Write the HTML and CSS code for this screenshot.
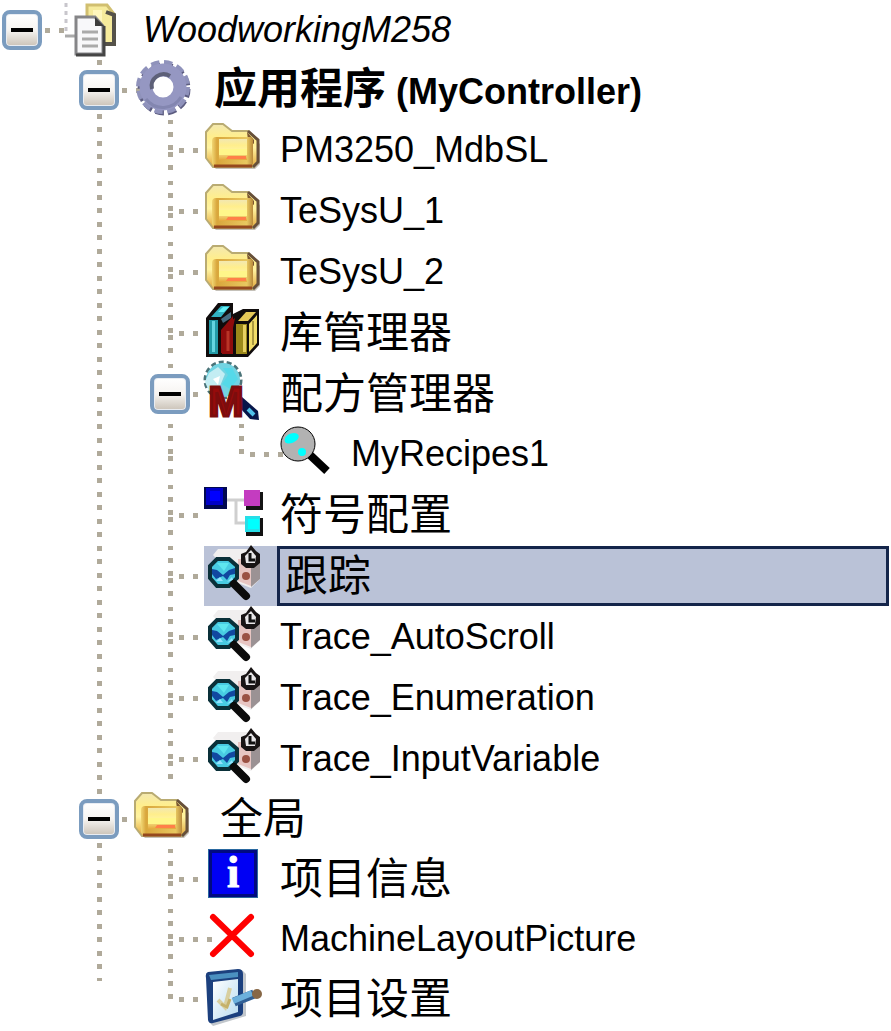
FILE: index.html
```html
<!DOCTYPE html>
<html lang="zh-CN">
<head>
  <meta charset="UTF-8">
  <title>WoodworkingM258</title>
  <meta name="viewport" content="width=device-width, initial-scale=1">
  <link rel="stylesheet" href="styles.css">
</head>
<body>
  <svg class="sprite" aria-hidden="true">
    <defs>
      <linearGradient id="gold" x1="0" y1="0" x2="0" y2="1">
        <stop offset="0" stop-color="#f3e8b0"/>
        <stop offset="0.3" stop-color="#ffee8c"/>
        <stop offset="0.55" stop-color="#fff3a0"/>
        <stop offset="1" stop-color="#e3a83c"/>
      </linearGradient>
      <linearGradient id="goldEdge" x1="0" y1="0" x2="1" y2="0">
        <stop offset="0" stop-color="#f1d774"/>
        <stop offset="0.12" stop-color="#d9a63c"/>
        <stop offset="0.85" stop-color="#e8c860"/>
        <stop offset="1" stop-color="#b98a3c"/>
      </linearGradient>
      <linearGradient id="tablet" x1="0" y1="0" x2="1" y2="1">
        <stop offset="0" stop-color="#ffffff"/>
        <stop offset="1" stop-color="#b9dcf0"/>
      </linearGradient>
    </defs>

    <symbol id="project" viewBox="0 0 60 60">
      <path d="M10 3v30" stroke="#c8c6cc" stroke-width="3" stroke-dasharray="4 4"/>
      <path d="M9 36h10" stroke="#aaa" stroke-width="3"/>
      <path d="M31 5h20l7 9v30H31z" fill="#f6eb9c" stroke="#d1bf70" stroke-width="3"/>
      <path d="M50 12l8 3v29H47" fill="none" stroke="#55524a" stroke-width="4"/>
      <path d="M37 10h9v20h-9z" fill="#fff7bd"/>
      <path d="M20 17h19l8 9v28H20z" fill="#f8f8fa" stroke="#858588" stroke-width="3"/>
      <path d="M20 55h28V26" fill="none" stroke="#454545" stroke-width="3"/>
      <path d="M39 17v9h9z" fill="#3d3d3d"/>
      <path d="M26 32h16M26 39h16M26 46h16" stroke="#aaa" stroke-width="3"/>
    </symbol>

    <symbol id="gear" viewBox="0 0 60 60">
      <circle cx="31" cy="29" r="23" fill="none" stroke="#5c5c80" stroke-width="7" stroke-dasharray="8 4"/>
      <circle cx="30" cy="27" r="24" fill="none" stroke="#8f92bb" stroke-width="6" stroke-dasharray="8 4.6"/>
      <circle cx="30" cy="27" r="17" fill="none" stroke="#9597c2" stroke-width="13"/>
      <path d="M19 29a12 12 0 0 1 18-13" fill="none" stroke="#5d6078" stroke-width="4"/>
      <path d="M13 39a21 21 0 0 0 35-2" fill="none" stroke="#8386b0" stroke-width="3"/>
    </symbol>

    <symbol id="folder" viewBox="0 0 60 60">
      <path d="M5 16l6-8h10l9 7h16l10 9v20l-5 5H12l-7-7z" fill="#8c8373" opacity=".5"/>
      <path d="M2 12l7-8h10l9 7h16l10 9v21l-5 6H9l-7-9z" fill="url(#gold)" stroke="#b9ab72" stroke-width="2"/>
      <path d="M44 11l10 9v22l-5 5" fill="none" stroke="#67503a" stroke-width="3"/>
      <path d="M43 12l7 8v4l-6-4z" fill="#7c5730"/>
      <path d="M12 17h34q3 0 3 3v23q0 3-3 3H12q-4 0-4-4V21q0-4 4-4z" fill="url(#goldEdge)"/>
      <path d="M15 19h28v21H15z" fill="url(#gold)"/>
      <path d="M15 29h28v6H15z" fill="#fff68a"/>
      <path d="M24 36h18v3H22z" fill="#ff8048"/>
      <path d="M10 46h38" stroke="#95491e" stroke-width="3"/>
    </symbol>

    <symbol id="books" viewBox="0 0 60 60">
      <path d="M2 15L14 0h15v11l10-5h16v36L44 54H2z" fill="#100c0c"/>
      <path d="M5 17h9v34H5z" fill="#239aa6"/>
      <path d="M8 18h3v31H8z" fill="#64d4df"/>
      <path d="M7 14L17 3h9l-9 11z" fill="#31b2c2"/>
      <path d="M14 9l5-5h6l-5 5z" fill="#63eff5"/>
      <path d="M17 16l10-7v6l-8 5z" fill="#456b80"/>
      <path d="M17 27l12-14v37H17z" fill="#8f0c0c"/>
      <path d="M19 26l8-8 4-3-2 10v26H18z" fill="#8f0c0c"/>
      <path d="M24 28v20" stroke="#b93427" stroke-width="3"/>
      <path d="M32 21h11v30H32z" fill="#9b881a"/>
      <path d="M39 22h3v27h-3z" fill="#e7cf61"/>
      <path d="M34 18l8-9h10l-8 9z" fill="#e6c958"/>
      <path d="M45 21l8-9v28l-8 9z" fill="#f1dc68"/>
      <path d="M49 18v24" stroke="#67561a" stroke-width="1"/>
    </symbol>

    <symbol id="recipe" viewBox="0 0 60 60">
      <path d="M35 31l17 16" stroke="#000" stroke-width="8"/>
      <circle cx="23" cy="20" r="17" fill="#b2b2b2" stroke="#000" stroke-width="1"/>
      <path d="M10 18c-2-5 4-9 9-9s6 4 3 7-9 5-12 2z" fill="#0ff"/>
      <circle cx="27" cy="28" r="4" fill="#0ff"/>
    </symbol>

    <symbol id="symbols" viewBox="0 0 60 60">
      <path d="M22 15h18M32 15v23h9" fill="none" stroke="#cfcfcf" stroke-width="3"/>
      <path d="M0 2h23v22H0z" fill="#000850"/>
      <path d="M2 3h17v17H2z" fill="#0000c8"/>
      <path d="M6 6h10v10H6z" fill="#00f"/>
      <path d="M42 7h17v18H42z" fill="#141414"/>
      <path d="M40 5h16v16H40z" fill="#c43cc0"/>
      <path d="M42 33h17v18H42z" fill="#111"/>
      <path d="M41 31h15v16H41z" fill="#26dfe8"/>
      <path d="M44 34h11v10H44z" fill="#0ff"/>
    </symbol>

    <symbol id="trace" viewBox="0 0 60 60">
      <path d="M9 9l5-6h30l12 9v21l-9 9-13-5z" fill="#f1efef"/>
      <path d="M34 13h13v27l-13-5z" fill="#e7c5c2"/>
      <path d="M47 16l9-4v21l-9 8z" fill="#9b9294"/>
      <circle cx="42" cy="30" r="4" fill="#9a5143"/>
      <path d="M37 12V8l5-2 5-7 5 6 4 3v9l-6 5h-8l-5-4z" fill="#181414"/>
      <path d="M41 10l6-6 5 6-1 7h-9z" fill="#e9e7e9"/>
      <path d="M46 7v7h5" fill="none" stroke="#111" stroke-width="3"/>
      <path d="M13 13h12l8 7v12l-8 8H13l-7-8V20z" fill="#48cbe2" stroke="#0a3039" stroke-width="4"/>
      <path d="M8 23l5 1 6 5 6-5 6-2v6l-5 1-3 5-4-4-7 3-4-5z" fill="#1148a0"/>
      <path d="M13 17h12l-5 8z" fill="#5ee6ef"/>
      <path d="M12 35h7l-3-4zM23 36l5-5 1 3z" fill="#94e4ff"/>
      <path d="M30 38l12 12" stroke="#0b0b0b" stroke-width="8" stroke-linecap="round"/>
    </symbol>

    <symbol id="picture" viewBox="0 0 60 60">
      <path d="M9 8l38 37M47 8L9 45" stroke="#f00" stroke-width="6" stroke-linecap="round"/>
    </symbol>

    <symbol id="settings" viewBox="0 0 60 60">
      <path d="M6 5l32-4 4 4v42L9 57l-4-4z" fill="#c2c7cc"/>
      <path d="M4 3l30-3q5 0 5 5v38q0 3-3 4L9 54q-4 1-5-3L2 9q-1-5 2-6z" fill="#1c407e"/>
      <path d="M5 6l29-3v5L7 11z" fill="#4b90c0"/>
      <path d="M9 13l25-3v33l-25 8z" fill="url(#tablet)"/>
      <path d="M14 31l7 7 5-19" fill="none" stroke="#d8cfa0" stroke-width="4"/>
      <path d="M17 35l6 3 3-8" fill="none" stroke="#c5b16a" stroke-width="3"/>
      <path d="M30 33l20-8" stroke="#315f94" stroke-width="9"/>
      <path d="M29 32l19-8" stroke="#6cb0dc" stroke-width="6"/>
      <circle cx="53" cy="25" r="5" fill="#876746"/>
    </symbol>
  </svg>

  <ul class="tree">
    <li>
      <div class="row branch long root">
        <button class="toggle" type="button" aria-expanded="true" aria-label="WoodworkingM258"></button>
        <svg class="icon"><use href="#project"/></svg>
        <span class="label latin">WoodworkingM258</span>
      </div>
      <ul class="project">
        <li>
          <div class="row branch long active">
            <button class="toggle" type="button" aria-expanded="true" aria-label="应用程序"></button>
            <svg class="icon"><use href="#gear"/></svg>
            <span class="label">应用程序<span class="latin"> (MyController)</span></span>
          </div>
          <ul class="nodes devices">
            <li><div class="row"><svg class="icon"><use href="#folder"/></svg><span class="label latin">PM3250_MdbSL</span></div></li>
            <li><div class="row"><svg class="icon"><use href="#folder"/></svg><span class="label latin">TeSysU_1</span></div></li>
            <li><div class="row"><svg class="icon"><use href="#folder"/></svg><span class="label latin">TeSysU_2</span></div></li>
            <li><div class="row"><svg class="icon"><use href="#books"/></svg><span class="label">库管理器</span></div></li>
            <li>
              <div class="row branch">
                <button class="toggle" type="button" aria-expanded="true" aria-label="配方管理器"></button>
                <svg class="icon" viewBox="0 0 60 60">
                  <circle cx="19" cy="16" r="18" fill="none" stroke="#4b7378" stroke-width="3" stroke-dasharray="5 3"/>
                  <circle cx="19" cy="16" r="17" fill="#72d4e2"/>
                  <path d="M5 9l9-6 7 7-5 12-11 5-4-9z" fill="#c3edf3"/>
                  <path d="M19 4h9l6 11-8 10-8-5 6-9z" fill="#55d9e9"/>
                  <path d="M9 15l7-3-2 9z" fill="#fff"/>
                  <path d="M38 33l16 14 1 9-9-1-9-10z" fill="#07164a"/>
                  <path d="M44 45l6 6" stroke="#50c2ec" stroke-width="4"/>
                  <text x="22" y="52" class="letter-m">M</text>
                </svg>
                <span class="label">配方管理器</span>
              </div>
              <ul class="nodes">
                <li><div class="row long"><svg class="icon"><use href="#recipe"/></svg><span class="label latin">MyRecipes1</span></div></li>
              </ul>
            </li>
            <li><div class="row"><svg class="icon"><use href="#symbols"/></svg><span class="label">符号配置</span></div></li>
            <li><div class="row selected"><svg class="icon"><use href="#trace"/></svg><span class="label">跟踪</span></div></li>
            <li><div class="row"><svg class="icon"><use href="#trace"/></svg><span class="label latin">Trace_AutoScroll</span></div></li>
            <li><div class="row"><svg class="icon"><use href="#trace"/></svg><span class="label latin">Trace_Enumeration</span></div></li>
            <li><div class="row"><svg class="icon"><use href="#trace"/></svg><span class="label latin">Trace_InputVariable</span></div></li>
          </ul>
        </li>
        <li>
          <div class="row branch global">
            <button class="toggle" type="button" aria-expanded="true" aria-label="全局"></button>
            <svg class="icon"><use href="#folder"/></svg>
            <span class="label">全局</span>
          </div>
          <ul class="nodes">
            <li>
              <div class="row">
                <svg class="icon" viewBox="0 0 60 60">
                  <path d="M4 0h50v49H4z" fill="#2a69a0"/>
                  <path d="M5 1h48v47H5z" fill="#000a80"/>
                  <path d="M8 4h42v41H8z" fill="#0000f4"/>
                  <text x="29" y="38" class="letter-i">i</text>
                </svg>
                <span class="label">项目信息</span>
              </div>
            </li>
            <li><div class="row long"><svg class="icon"><use href="#picture"/></svg><span class="label latin">MachineLayoutPicture</span></div></li>
            <li><div class="row"><svg class="icon"><use href="#settings"/></svg><span class="label">项目设置</span></div></li>
          </ul>
        </li>
      </ul>
    </li>
  </ul>

  <script>
    document.querySelectorAll('.toggle').forEach(function (btn) {
      btn.addEventListener('click', function () {
        const open = btn.getAttribute('aria-expanded') === 'true';
        btn.setAttribute('aria-expanded', String(!open));
        btn.parentElement.nextElementSibling.hidden = open;
      });
    });
  </script>
</body>
</html>
```

FILE: styles.css
```css
* { box-sizing: border-box; }
body { margin: 0; background: #fff; color: #000; font-family: "Liberation Sans Narrow", "Arial Narrow", "Liberation Sans", "Noto Sans CJK SC", sans-serif; font-size: 43px; line-height: 54px; }
ul { list-style: none; margin: 0; padding: 0; }
.sprite { position: absolute; width: 0; height: 0; }

/* rows */
.row { --dots: 19px; display: flex; align-items: center; height: 60px; padding-left: 56px; background: repeating-linear-gradient(to right, #b0aa9a 0 5px, transparent 5px 14px) 31px 28px / var(--dots) 5px no-repeat; }
.row.long { --dots: 33px; }
.row.branch { padding-left: 2px; }
.icon { flex: none; width: 60px; height: 60px; overflow: visible; }
.icon use, symbol { overflow: visible; }
.label { flex: 1; margin: 0 2px 0 13px; border: 3px solid transparent; white-space: nowrap; }
.latin { font-size: 36px; }
.root .label { margin-left: 24px; font-style: italic; }
.global .label { margin-left: 24px; }
.active .label { margin-left: 18px; font-weight: bold; }
.selected { background: repeating-linear-gradient(to right, #b0aa9a 0 5px, transparent 5px 14px) 31px 28px / 19px 5px no-repeat, linear-gradient(#bac2d7, #bac2d7) 56px 0 / 73px 60px no-repeat; }
.selected .label { padding-left: 5px; border-color: #14254a; background: #bac2d7; }

/* expand / collapse box */
.toggle { position: relative; flex: none; width: 40px; height: 40px; margin-right: 14px; padding: 0; border: 4px solid #7b9cbf; border-radius: 8px; background: linear-gradient(#fff, #f6f4f1 50%, #cbc3b8); box-shadow: inset 0 0 0 1px #e8ecf2; cursor: pointer; }
.toggle::before { content: ""; position: absolute; top: 14px; left: 5px; width: 22px; height: 4px; background: #000; }
.toggle[aria-expanded="false"]::after { content: ""; position: absolute; top: 5px; left: 14px; width: 4px; height: 22px; background: #000; }

/* dotted guide lines */
.project { position: relative; padding-left: 77px; }
.project::before { content: ""; position: absolute; z-index: -1; top: 0; bottom: 48px; left: 97px; width: 5px; background: repeating-linear-gradient(#b0aa9a 0 5px, transparent 5px 13px, #b0aa9a 13px 18px, transparent 18px 27px); }
.nodes { padding-left: 71px; }
.nodes > li { background: linear-gradient(#b0aa9a 0 4px, transparent 4px 12px, #b0aa9a 12px 17px, transparent 17px 25px, #b0aa9a 25px 30px, transparent 30px 32px, #b0aa9a 32px 37px, transparent 37px 45px, #b0aa9a 45px 50px, transparent 50px 60px) 20px 0 / 5px 60px repeat-y; }
.nodes:not(.devices) > li:last-child { background-size: 5px 30px; background-repeat: no-repeat; background-image: linear-gradient(#b0aa9a 0 4px, transparent 4px 12px, #b0aa9a 12px 17px, transparent 17px 25px, #b0aa9a 25px 30px); }
.devices { display: grid; row-gap: 1px; }

.letter-m { font: bold 42px "Liberation Sans", sans-serif; fill: #960b0b; stroke: #7c0d0d; stroke-width: 3px; text-anchor: middle; }
.letter-i { font: bold 44px "Liberation Serif", serif; fill: #fff; stroke: #fff; stroke-width: 1px; text-anchor: middle; }
```
